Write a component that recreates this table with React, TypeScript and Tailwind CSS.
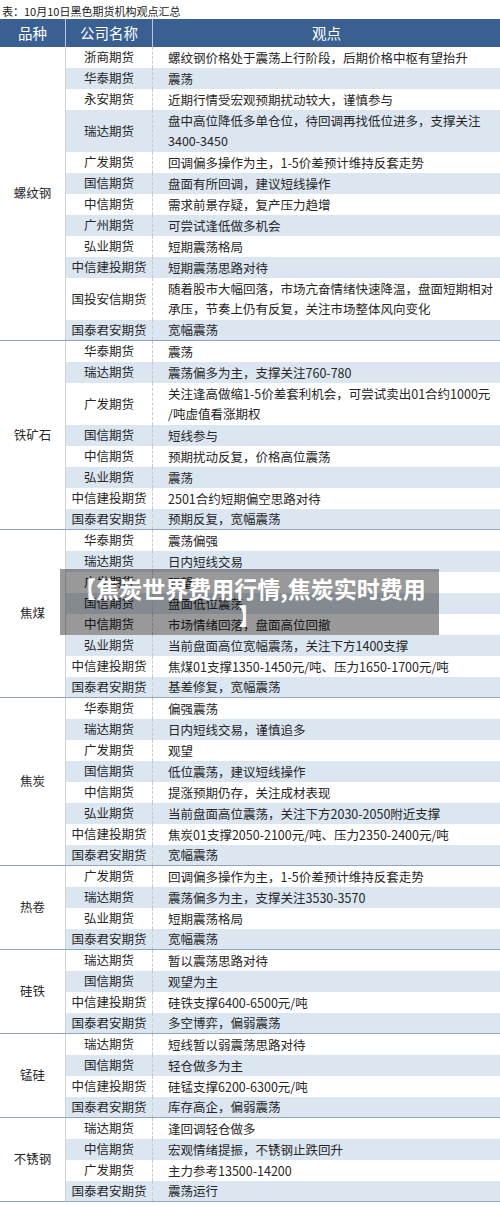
import React from "react";

type Row = { c: string; t: string[] };
type Group = { name: string; rows: Row[] };

const r = (c: string, ...t: string[]): Row => ({ c, t });

const groups: Group[] = [
  {
    name: "螺纹钢",
    rows: [
      r("浙商期货", "螺纹钢价格处于震荡上行阶段，后期价格中枢有望抬升"),
      r("华泰期货", "震荡"),
      r("永安期货", "近期行情受宏观预期扰动较大，谨慎参与"),
      r("瑞达期货", "盘中高位降低多单仓位，待回调再找低位进多，支撑关注", "3400-3450"),
      r("广发期货", "回调偏多操作为主，1-5价差预计维持反套走势"),
      r("国信期货", "盘面有所回调，建议短线操作"),
      r("中信期货", "需求前景存疑，复产压力趋增"),
      r("广州期货", "可尝试逢低做多机会"),
      r("弘业期货", "短期震荡格局"),
      r("中信建投期货", "短期震荡思路对待"),
      r("国投安信期货", "随着股市大幅回落，市场亢奋情绪快速降温，盘面短期相对", "承压，节奏上仍有反复，关注市场整体风向变化"),
      r("国泰君安期货", "宽幅震荡"),
    ],
  },
  {
    name: "铁矿石",
    rows: [
      r("华泰期货", "震荡"),
      r("瑞达期货", "震荡偏多为主，支撑关注760-780"),
      r("广发期货", "关注逢高做缩1-5价差套利机会，可尝试卖出01合约1000元", "/吨虚值看涨期权"),
      r("国信期货", "短线参与"),
      r("中信期货", "预期扰动反复，价格高位震荡"),
      r("弘业期货", "震荡"),
      r("中信建投期货", "2501合约短期偏空思路对待"),
      r("国泰君安期货", "预期反复，宽幅震荡"),
    ],
  },
  {
    name: "焦煤",
    rows: [
      r("华泰期货", "震荡偏强"),
      r("瑞达期货", "日内短线交易"),
      r("广发期货", "观望"),
      r("国信期货", "盘面低位震荡"),
      r("中信期货", "市场情绪回落，盘面高位回撤"),
      r("弘业期货", "当前盘面高位宽幅震荡，关注下方1400支撑"),
      r("中信建投期货", "焦煤01支撑1350-1450元/吨、压力1650-1700元/吨"),
      r("国泰君安期货", "基差修复，宽幅震荡"),
    ],
  },
  {
    name: "焦炭",
    rows: [
      r("华泰期货", "偏强震荡"),
      r("瑞达期货", "日内短线交易，谨慎追多"),
      r("广发期货", "观望"),
      r("国信期货", "低位震荡，建议短线操作"),
      r("中信期货", "提涨预期仍存，关注成材表现"),
      r("弘业期货", "当前盘面高位震荡，关注下方2030-2050附近支撑"),
      r("中信建投期货", "焦炭01支撑2050-2100元/吨、压力2350-2400元/吨"),
      r("国泰君安期货", "宽幅震荡"),
    ],
  },
  {
    name: "热卷",
    rows: [
      r("广发期货", "回调偏多操作为主，1-5价差预计维持反套走势"),
      r("瑞达期货", "震荡偏多为主，支撑关注3530-3570"),
      r("弘业期货", "短期震荡格局"),
      r("国泰君安期货", "宽幅震荡"),
    ],
  },
  {
    name: "硅铁",
    rows: [
      r("瑞达期货", "暂以震荡思路对待"),
      r("国信期货", "观望为主"),
      r("中信建投期货", "硅铁支撑6400-6500元/吨"),
      r("国泰君安期货", "多空博弈，偏弱震荡"),
    ],
  },
  {
    name: "锰硅",
    rows: [
      r("瑞达期货", "短线暂以弱震荡思路对待"),
      r("国信期货", "轻仓做多为主"),
      r("中信建投期货", "硅锰支撑6200-6300元/吨"),
      r("国泰君安期货", "库存高企，偏弱震荡"),
    ],
  },
  {
    name: "不锈钢",
    rows: [
      r("瑞达期货", "逢回调轻仓做多"),
      r("中信期货", "宏观情绪提振，不锈钢止跌回升"),
      r("广发期货", "主力参考13500-14200"),
      r("国泰君安期货", "震荡运行"),
    ],
  },
];

function GroupBlock({ g }: { g: Group }) {
  return (
    <div className="flex border-b border-[#8ea6c6]">
      <div className="w-[66px] shrink-0 border-r border-[#d2d2d2] flex items-center justify-center">
        {g.name}
      </div>
      <div className="flex-1 flex flex-col">
        {g.rows.map((row, i) => {
          const last = i === g.rows.length - 1;
          const dbl = row.t.length > 1;
          const h = dbl ? (last ? "h-[41px]" : "h-[42px]") : last ? "h-[20px]" : "h-[21px]";
          const bg = i % 2 === 1 ? "bg-[#dce6f1]" : "bg-white";
          return (
            <div key={i} className={`flex ${h} ${bg}`}>
              <div className="w-[87px] shrink-0 border-r border-dashed border-[#c8c8c8] flex items-center justify-center whitespace-nowrap">
                {row.c}
              </div>
              <div className="flex-1 pl-[15px] flex flex-col justify-center leading-[20px] whitespace-nowrap">
                {row.t.map((line, j) => (
                  <div key={j}>{line}</div>
                ))}
              </div>
            </div>
          );
        })}
      </div>
    </div>
  );
}

export default function App() {
  return (
    <div
      className="relative w-[500px] h-[1205px] bg-white text-[#262626] text-[12.5px] overflow-hidden"
      style={{ fontFamily: '"Noto Sans CJK SC", "Noto Sans", sans-serif' }}
    >
      <div className="h-[19px] pt-[3px] pl-[2px] text-[11px] leading-[16px] text-[#222]">
        表：10月10日黑色期货机构观点汇总
      </div>
      <div className="flex h-[28px] bg-[#3a6091] text-white text-[14.5px]">
        <div className="w-[66px] shrink-0 border-r border-[#b9c7d9] flex items-center justify-center">品种</div>
        <div className="w-[87px] shrink-0 border-r border-[#b9c7d9] flex items-center justify-center">公司名称</div>
        <div className="flex-1 flex items-center justify-center">观点</div>
      </div>
      {groups.map((g, i) => (
        <GroupBlock key={i} g={g} />
      ))}
      <div className="absolute left-[60px] top-[569px] w-[379px] h-[66px] bg-black/40 flex flex-col items-center justify-center text-white font-bold text-[23px] leading-[27px] whitespace-nowrap">
        <div>【焦炭世界费用行情,焦炭实时费用</div>
        <div>】</div>
      </div>
    </div>
  );
}
